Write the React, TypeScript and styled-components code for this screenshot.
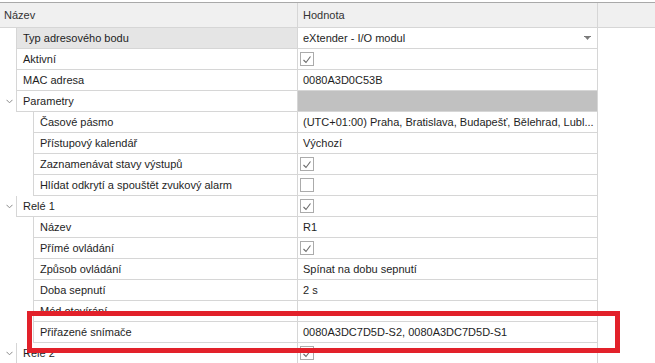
import React from 'react';
import styled, { createGlobalStyle } from 'styled-components';

const GlobalStyle = createGlobalStyle`
  html, body {
    margin: 0;
    padding: 0;
    background: #fff;
  }
  body {
    font-family: "Liberation Sans", Arial, sans-serif;
    font-size: 11px;
    color: #1e1e1e;
  }
`;

const NAME_EDGE = 298;
const VALUE_WIDTH = 300;
const LINE = '#d6d6d6';

const Grid = styled.div`
  position: relative;
  width: 655px;
  height: 363px;
  overflow: hidden;
  padding-top: 2px;
  box-sizing: border-box;
`;

const Header = styled.div`
  display: flex;
  height: 26px;
  box-sizing: border-box;
  background: #f0f0f0;
  border-top: 1px solid #a9a9a9;
  border-bottom: 1px solid ${LINE};
`;

const HeaderCell = styled.div<{ $width: number }>`
  width: ${({ $width }) => $width}px;
  box-sizing: border-box;
  border-right: 1px solid ${LINE};
  padding-left: ${({ $width }) => ($width === NAME_EDGE ? 4 : 5)}px;
  display: flex;
  align-items: center;
  color: #333;
`;

const Row = styled.div`
  display: flex;
  height: 21px;
`;

const Gutter = styled.div<{ $width: number }>`
  width: ${({ $width }) => $width}px;
  flex-shrink: 0;
  display: flex;
  align-items: center;
  padding-left: 6px;
  box-sizing: border-box;
`;

const NameCell = styled.div<{ $indent: number; $selected?: boolean }>`
  width: ${({ $indent }) => NAME_EDGE - $indent}px;
  box-sizing: border-box;
  border-left: 1px solid ${LINE};
  border-right: 1px solid ${LINE};
  border-bottom: 1px solid ${LINE};
  background: ${({ $selected }) => ($selected ? '#e5e5e5' : '#fff')};
  padding-left: 6px;
  display: flex;
  align-items: center;
  white-space: nowrap;
  overflow: hidden;
`;

const ValueCell = styled.div<{ $shaded?: boolean }>`
  width: ${VALUE_WIDTH}px;
  box-sizing: border-box;
  border-right: 1px solid ${LINE};
  border-bottom: 1px solid ${LINE};
  background: ${({ $shaded }) => ($shaded ? '#c1c1c1' : '#fff')};
  padding: 0 6px 0 5px;
  display: flex;
  align-items: center;
  white-space: nowrap;
  overflow: hidden;
`;

const ValueText = styled.span`
  flex: 1;
`;

const Box = styled.span`
  width: 14px;
  height: 14px;
  box-sizing: border-box;
  margin-left: -3px;
  border: 1px solid #ababab;
  background: #fff;
  display: flex;
  align-items: center;
  justify-content: center;
`;

const Highlight = styled.div`
  position: absolute;
  left: 27px;
  top: 311px;
  width: 593px;
  height: 42px;
  box-sizing: border-box;
  border: 5px solid #e2212a;
  pointer-events: none;
`;

type Item = {
  name: string;
  level: 0 | 1;
  category?: boolean;
  selected?: boolean;
  value?: string;
  check?: boolean;
  combo?: boolean;
  shaded?: boolean;
};

const items: Item[] = [
  { name: 'Typ adresového bodu', level: 0, selected: true, value: 'eXtender - I/O modul', combo: true },
  { name: 'Aktivní', level: 0, check: true },
  { name: 'MAC adresa', level: 0, value: '0080A3D0C53B' },
  { name: 'Parametry', level: 0, category: true, shaded: true },
  { name: 'Časové pásmo', level: 1, value: '(UTC+01:00) Praha, Bratislava, Budapešť, Bělehrad, Lubl...' },
  { name: 'Přístupový kalendář', level: 1, value: 'Výchozí' },
  { name: 'Zaznamenávat stavy výstupů', level: 1, check: true },
  { name: 'Hlídat odkrytí a spouštět zvukový alarm', level: 1, check: false },
  { name: 'Relé 1', level: 0, category: true, check: true },
  { name: 'Název', level: 1, value: 'R1' },
  { name: 'Přímé ovládání', level: 1, check: true },
  { name: 'Způsob ovládání', level: 1, value: 'Spínat na dobu sepnutí' },
  { name: 'Doba sepnutí', level: 1, value: '2 s' },
  { name: 'Mód otevírání', level: 1, value: '' },
  { name: 'Přiřazené snímače', level: 1, value: '0080A3DC7D5D-S2, 0080A3DC7D5D-S1' },
  { name: 'Relé 2', level: 0, category: true, check: true },
];

function Chevron() {
  return (
    <svg width="7" height="5" viewBox="0 0 7 5">
      <polyline points="0.5,0.8 3.5,3.8 6.5,0.8" fill="none" stroke="#8a8a8a" strokeWidth="1" />
    </svg>
  );
}

function ComboArrow() {
  return (
    <svg width="7" height="4" viewBox="0 0 7 4">
      <rect x="0" y="0" width="7" height="1" fill="#7a7a7a" />
      <polygon points="1,1 6,1 3.5,4" fill="#7a7a7a" />
    </svg>
  );
}

function CheckBox({ checked }: { checked: boolean }) {
  return (
    <Box>
      {checked && (
        <svg width="10" height="9" viewBox="0 0 10 9">
          <polyline points="1.5,5 4,7.5 8.5,1.5" fill="none" stroke="#6b6b6b" strokeWidth="1.1" />
        </svg>
      )}
    </Box>
  );
}

export default function App() {
  return (
    <>
      <GlobalStyle />
      <Grid>
        <Header>
          <HeaderCell $width={NAME_EDGE}>Název</HeaderCell>
          <HeaderCell $width={VALUE_WIDTH}>Hodnota</HeaderCell>
        </Header>
        {items.map((item) => {
          const indent = item.level === 0 ? 16 : 33;
          return (
            <Row key={item.name}>
              <Gutter $width={indent}>{item.category && <Chevron />}</Gutter>
              <NameCell $indent={indent} $selected={item.selected}>
                {item.name}
              </NameCell>
              <ValueCell $shaded={item.shaded}>
                {item.check !== undefined ? (
                  <CheckBox checked={item.check} />
                ) : (
                  <ValueText>{item.value}</ValueText>
                )}
                {item.combo && <ComboArrow />}
              </ValueCell>
            </Row>
          );
        })}
        <Highlight />
      </Grid>
    </>
  );
}
